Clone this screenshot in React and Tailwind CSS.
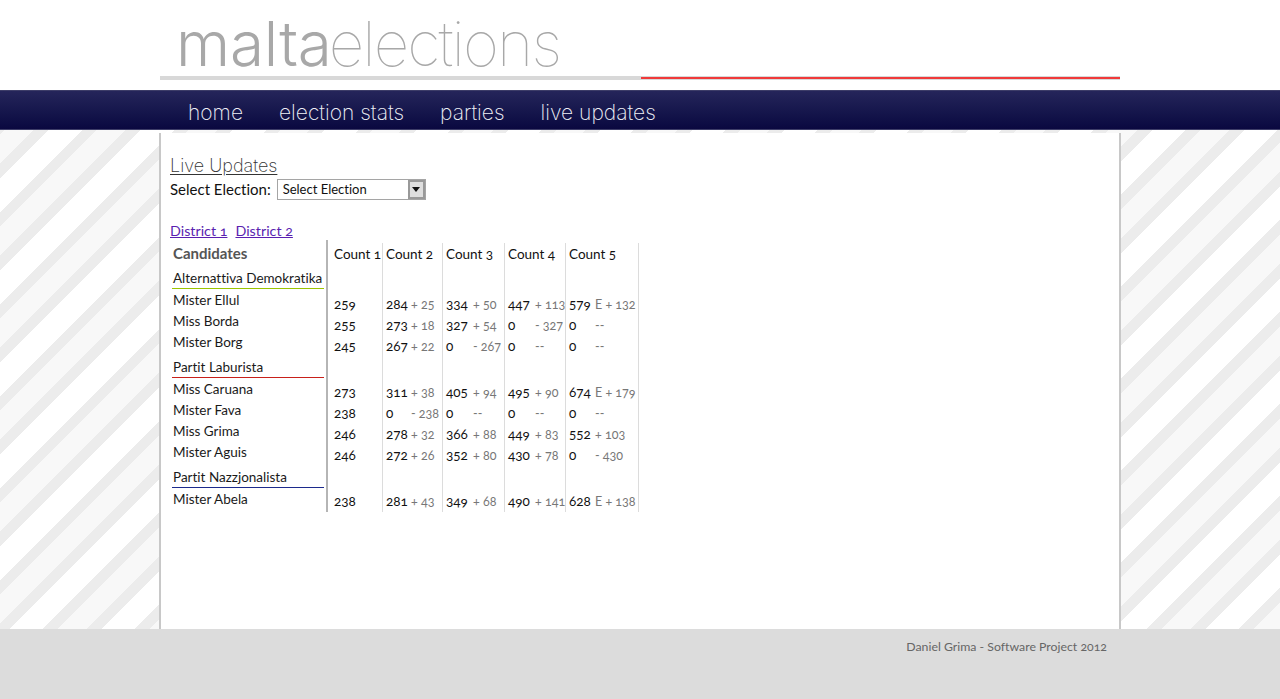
const body = "font-['Lato','Open_Sans',sans-serif] [font-variant-numeric:oldstyle-nums] [font-variant-ligatures:none]"

const parties = [
  { name: 'Alternattiva Demokratika', line: 'border-[#9bc400]', people: ['Mister Ellul', 'Miss Borda', 'Mister Borg'] },
  { name: 'Partit Laburista', line: 'border-[#c8201a]', people: ['Miss Caruana', 'Mister Fava', 'Miss Grima', 'Mister Aguis'] },
  { name: 'Partit Nazzjonalista', line: 'border-[#1c2a8c]', people: ['Mister Abela'] },
]

// one array per count column: [votes, change]
const counts = [
  {
    title: 'Count 1', w: 'w-[55px]', pad: 'pl-[6px]', valueW: 'w-[25px]',
    groups: [[['259'], ['255'], ['245']], [['273'], ['238'], ['246'], ['246']], [['238']]],
  },
  {
    title: 'Count 2', w: 'w-[60px]', pad: 'pl-[3px]', valueW: 'w-[25px]',
    groups: [
      [['284', '+ 25'], ['273', '+ 18'], ['267', '+ 22']],
      [['311', '+ 38'], ['0', '- 238'], ['278', '+ 32'], ['272', '+ 26']],
      [['281', '+ 43']],
    ],
  },
  {
    title: 'Count 3', w: 'w-[62px]', pad: 'pl-[3px]', valueW: 'w-[27px]',
    groups: [
      [['334', '+ 50'], ['327', '+ 54'], ['0', '- 267']],
      [['405', '+ 94'], ['0', '--'], ['366', '+ 88'], ['352', '+ 80']],
      [['349', '+ 68']],
    ],
  },
  {
    title: 'Count 4', w: 'w-[61px]', pad: 'pl-[3px]', valueW: 'w-[27px]',
    groups: [
      [['447', '+ 113'], ['0', '- 327'], ['0', '--']],
      [['495', '+ 90'], ['0', '--'], ['449', '+ 83'], ['430', '+ 78']],
      [['490', '+ 141']],
    ],
  },
  {
    title: 'Count 5', w: 'w-[73px]', pad: 'pl-[3px]', valueW: 'w-[26px]',
    groups: [
      [['579', 'E + 132'], ['0', '--'], ['0', '--']],
      [['674', 'E + 179'], ['0', '--'], ['552', '+ 103'], ['0', '- 430']],
      [['628', 'E + 138']],
    ],
  },
]

function CountColumn({ col }) {
  return (
    <div className={`${col.w} ${col.pad} shrink-0 border-r border-[#dcdcdc] text-[13.5px] text-[#111]`}>
      <div className="h-[22px] leading-[22px] whitespace-nowrap">{col.title}</div>
      {col.groups.map((rows, i) => (
        <div key={i} className={i === 0 ? 'mt-[29px]' : 'mt-[25px]'}>
          {rows.map((r, j) => (
            <div key={j} className="flex h-[21px] items-baseline leading-[21px] whitespace-nowrap">
              <span className={`${col.valueW} shrink-0`}>{r[0]}</span>
              <span className="text-[12.5px] text-[#777]">{r[1]}</span>
            </div>
          ))}
        </div>
      ))}
    </div>
  )
}

function CandidateList() {
  return (
    <div className="w-[158px] shrink-0 border-r-[2px] border-[#b5b5b5] pr-[2px] pl-[2px] text-[13.5px] text-[#1a1a1a]">
      <div className="h-[27px] pl-[1px] text-[15px] leading-[26px] font-bold text-[#555]">Candidates</div>
      {parties.map((p) => (
        <div key={p.name} className="mt-[1px] mb-[4px] last:mb-0">
          <div className={`mb-[1px] h-[21px] border-b ${p.line} pl-[1px] leading-[21px] whitespace-nowrap`}>{p.name}</div>
          {p.people.map((n) => (
            <div key={n} className="h-[21px] pl-[1px] leading-[21px]">{n}</div>
          ))}
        </div>
      ))}
    </div>
  )
}

export default function App() {
  return (
    <div className={`flex h-[699px] flex-col overflow-hidden bg-white ${body}`}>
      <header className="h-[90px] shrink-0">
        <div className="mx-auto w-[960px]">
          <div className="flex h-[76px] pt-[12px] pl-[16px] font-['Inter',sans-serif] text-[62px] leading-[64px] text-[#a8a8a8]">
            <span className="font-light tracking-[-0.2px]">malta</span>
            <span className="ml-[-3px] font-thin tracking-[-1.9px]">elections</span>
          </div>
          <div className="flex h-[4px]">
            <div className="w-[481px] bg-[#d8d8d8]"></div>
            <div className="flex-1 border-y border-[#d8d8d8] bg-[#f03a3a]"></div>
          </div>
        </div>
      </header>

      <nav className="h-[40px] shrink-0 border-y border-[#3d3d68] bg-gradient-to-b from-[#25255a] to-[#0a0840]">
        <div className="mx-auto flex w-[960px] gap-[36px] pl-[28px] font-['Inter',sans-serif] text-[21px] leading-[43px] font-extralight text-[#eef0f6]">
          <a>home</a>
          <a>election stats</a>
          <a>parties</a>
          <a>live updates</a>
        </div>
      </nav>

      <main className="flex-1 bg-[repeating-linear-gradient(135deg,#ececec_0,#ececec_3.5px,#f8f8f8_3.5px,#f8f8f8_24px,#ececec_24px,#ececec_34.6px,#fff_34.6px,#fff_58px,#ececec_58px,#ececec_65.05px)]">
        <div className="mx-auto mt-[3px] h-[496px] w-[962px] border-x-[2px] border-[#c8c8c8] bg-white pt-[22px] pl-[9px]">
          <h1 className="font-['Inter',sans-serif] text-[18px] leading-[22px] font-extralight text-[#333]">
            <span className="underline underline-offset-2">Live Updates</span>
          </h1>
          <div className="mt-[1px] flex h-[22px] items-center gap-[6px] text-[15px] text-[#111]">
            <span>Select Election:</span>
            <div className="flex h-[21px] w-[149px] items-center justify-between border border-[#a5a5a5] pl-[5px] text-[13px]">
              <span className="pt-[1px]">Select Election</span>
              <span className="flex h-[19px] w-[17px] items-center justify-center border-2 border-[#999] bg-[#dedede]">
                <svg viewBox="0 0 8 5" className="h-[5px] w-[8px]"><path d="M0 0h8L4 5z" fill="#111" /></svg>
              </span>
            </div>
          </div>
          <div className="mt-[21px] flex h-[19px] gap-[8px] text-[14.3px] leading-[20px] text-[#5a1fb0]">
            <a className="underline">District 1</a>
            <a className="underline">District 2</a>
          </div>
          <div className="flex">
            <CandidateList />
            <div className="mt-[3px] flex h-[269px]">
              {counts.map((c) => (
                <CountColumn key={c.title} col={c} />
              ))}
            </div>
          </div>
        </div>
      </main>

      <footer className="h-[70px] shrink-0 bg-[#dcdcdc]">
        <div className="mx-auto w-[960px] pt-[9px] pr-[13px] text-right text-[12.3px] leading-[18px] text-[#666]">
          Daniel Grima - Software Project 2012
        </div>
      </footer>
    </div>
  )
}
